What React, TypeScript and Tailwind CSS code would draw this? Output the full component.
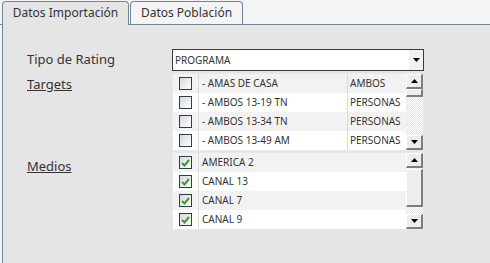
import React from 'react'

const targets = [
  { name: '- AMAS DE CASA', kind: 'AMBOS' },
  { name: '- AMBOS 13-19 TN', kind: 'PERSONAS' },
  { name: '- AMBOS 13-34 TN', kind: 'PERSONAS' },
  { name: '- AMBOS 13-49 AM', kind: 'PERSONAS' },
]

const medios = ['AMERICA 2', 'CANAL 13', 'CANAL 7', 'CANAL 9']

function Arrow({ up }: { up?: boolean }) {
  return (
    <svg width="7" height="4" viewBox="0 0 7 4">
      <polygon points={up ? '3.5,0 7,4 0,4' : '0,0 7,0 3.5,4'} fill="#000" />
    </svg>
  )
}

const btn =
  'bg-[#ededed] border-t border-l border-t-white border-l-white border-r-2 border-b-2 border-r-[#7d7d7d] border-b-[#7d7d7d]'

function ScrollBar({ thumb, trackBefore = 0 }: { thumb: number; trackBefore?: number }) {
  return (
    <div className="w-[17px] flex flex-col bg-[image:repeating-conic-gradient(#e4e4e4_0%_25%,#ffffff_0%_50%)] bg-size-[2px_2px]">
      <div className={`${btn} h-[15px] flex items-center justify-center`}>
        <Arrow up />
      </div>
      {trackBefore > 0 && <div style={{ height: trackBefore }} />}
      <div className={btn} style={{ height: thumb }} />
      <div className="flex-1" />
      <div className={`${btn} h-[15px] flex items-center justify-center`}>
        <Arrow />
      </div>
    </div>
  )
}

function Check({ checked }: { checked?: boolean }) {
  return (
    <div className="w-[13px] h-[13px] border border-[#2f3d4b] bg-linear-to-br from-[#d3d9e0] to-white flex items-center justify-center">
      {checked && (
        <svg width="9" height="8" viewBox="0 0 9 8">
          <polyline points="1,4 3.5,6.5 8,1" fill="none" stroke="#3f9a2c" strokeWidth="2" />
        </svg>
      )}
    </div>
  )
}

export default function App() {
  return (
    <div className="w-[490px] h-[263px] bg-[#f4f4f4] flex flex-col overflow-hidden font-['Noto_Sans',sans-serif] text-[#333]">
      <div className="h-[25px] border-b border-[#6f8794] flex items-end pl-[2px] shrink-0">
        <div className="w-[127px] h-[24px] -mb-px bg-[#e5e5e5] border border-b-0 border-[#6f8794] rounded-t-[4px] text-[12px] flex items-center justify-center pb-[1px]">
          Datos Importación
        </div>
        <div className="w-[113px] h-[23px] ml-[1px] bg-[#f4f4f4] border border-b-0 border-[#6f8794] rounded-t-[4px] text-[12px] flex items-center justify-center">
          Datos Población
        </div>
      </div>

      <div className="flex-1 ml-[2px] bg-[#e5e5e5] border-l border-[#6f8794] pl-[24px] pt-[24px]">
        <div className="flex items-center h-[22px]">
          <div className="w-[145px] text-[13px]">Tipo de Rating</div>
          <div className="w-[252px] h-[22px] border border-[#3a3a3a] bg-white flex items-center">
            <div className="flex-1 pl-[2px] text-[10px]">PROGRAMA</div>
            <div className="w-[14px] h-full bg-[#f1f1f1] flex items-center justify-center">
              <Arrow />
            </div>
          </div>
        </div>

        <div className="flex items-start mt-[2px]">
          <div className="w-[145px] text-[13px] underline pt-[2px]">Targets</div>
          <div className="w-[252px] border border-[#e8e8e8] bg-[#f2f2f2] flex">
            <div className="flex-1">
              {targets.map((t, i) => (
                <div key={t.name} className={`h-[19px] flex text-[10px] ${i % 2 ? 'bg-white' : 'bg-[#f2f2f2]'}`}>
                  <div className="w-[26px] border-r border-[#dadada] flex items-center justify-center">
                    <Check />
                  </div>
                  <div className="flex-1 pl-[3px] flex items-center">{t.name}</div>
                  <div className="w-[59px] border-l border-[#dadada] pl-[2px] flex items-center">{t.kind}</div>
                </div>
              ))}
            </div>
            <ScrollBar thumb={8} />
          </div>
        </div>

        <div className="flex items-start mt-[1px]">
          <div className="w-[145px] text-[13px] underline pt-[5px]">Medios</div>
          <div className="w-[252px] border border-[#e8e8e8] bg-[#f2f2f2] flex">
            <div className="flex-1">
              {medios.map((m, i) => (
                <div key={m} className={`h-[19px] flex text-[10px] ${i % 2 ? 'bg-white' : 'bg-[#f2f2f2]'}`}>
                  <div className="w-[26px] border-r border-[#dadada] flex items-center justify-center">
                    <Check checked />
                  </div>
                  <div className="flex-1 pl-[3px] flex items-center">{m}</div>
                </div>
              ))}
            </div>
            <ScrollBar thumb={38} trackBefore={1} />
          </div>
        </div>
      </div>
    </div>
  )
}
